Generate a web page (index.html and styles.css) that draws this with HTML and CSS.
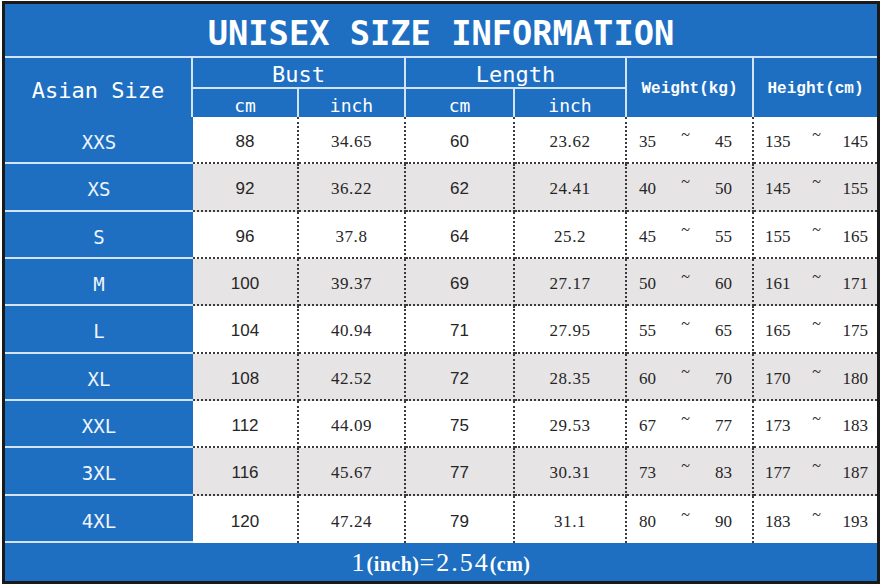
FILE: index.html
```html
<!DOCTYPE html>
<html lang="en">
  <head>
    <meta charset="UTF-8" />
    <meta name="viewport" content="width=device-width, initial-scale=1.0" />
    <title>Unisex Size Information</title>
    <link rel="stylesheet" href="styles.css">
  </head>
  <body>
    <div class="chart">
      <div class="title">UNISEX SIZE INFORMATION</div>

      <table class="sizes">
        <colgroup>
          <col class="c-size" />
          <col class="c-bcm" />
          <col class="c-binch" />
          <col class="c-lcm" />
          <col class="c-linch" />
          <col class="c-weight" />
          <col class="c-height" />
        </colgroup>
        <thead>
          <tr class="head-top">
            <th rowspan="2" class="size-head">Asian Size</th>
            <th colspan="2" class="group">Bust</th>
            <th colspan="2" class="group">Length</th>
            <th rowspan="2" class="small-head">Weight(kg)</th>
            <th rowspan="2" class="small-head last">Height(cm)</th>
          </tr>
          <tr class="head-sub">
            <th class="unit">cm</th>
            <th class="unit">inch</th>
            <th class="unit">cm</th>
            <th class="unit">inch</th>
          </tr>
        </thead>
        <tbody>
          <tr>
            <th class="size">XXS</th>
            <td class="cm">88</td><td class="inch">34.65</td>
            <td class="cm">60</td><td class="inch">23.62</td>
            <td class="w"><div class="range"><span>35</span><span class="tilde">~</span><span>45</span></div></td>
            <td class="h"><div class="range"><span>135</span><span class="tilde">~</span><span>145</span></div></td>
          </tr>
          <tr class="alt">
            <th class="size">XS</th>
            <td class="cm">92</td><td class="inch">36.22</td>
            <td class="cm">62</td><td class="inch">24.41</td>
            <td class="w"><div class="range"><span>40</span><span class="tilde">~</span><span>50</span></div></td>
            <td class="h"><div class="range"><span>145</span><span class="tilde">~</span><span>155</span></div></td>
          </tr>
          <tr>
            <th class="size">S</th>
            <td class="cm">96</td><td class="inch">37.8</td>
            <td class="cm">64</td><td class="inch">25.2</td>
            <td class="w"><div class="range"><span>45</span><span class="tilde">~</span><span>55</span></div></td>
            <td class="h"><div class="range"><span>155</span><span class="tilde">~</span><span>165</span></div></td>
          </tr>
          <tr class="alt">
            <th class="size">M</th>
            <td class="cm">100</td><td class="inch">39.37</td>
            <td class="cm">69</td><td class="inch">27.17</td>
            <td class="w"><div class="range"><span>50</span><span class="tilde">~</span><span>60</span></div></td>
            <td class="h"><div class="range"><span>161</span><span class="tilde">~</span><span>171</span></div></td>
          </tr>
          <tr>
            <th class="size">L</th>
            <td class="cm">104</td><td class="inch">40.94</td>
            <td class="cm">71</td><td class="inch">27.95</td>
            <td class="w"><div class="range"><span>55</span><span class="tilde">~</span><span>65</span></div></td>
            <td class="h"><div class="range"><span>165</span><span class="tilde">~</span><span>175</span></div></td>
          </tr>
          <tr class="alt">
            <th class="size">XL</th>
            <td class="cm">108</td><td class="inch">42.52</td>
            <td class="cm">72</td><td class="inch">28.35</td>
            <td class="w"><div class="range"><span>60</span><span class="tilde">~</span><span>70</span></div></td>
            <td class="h"><div class="range"><span>170</span><span class="tilde">~</span><span>180</span></div></td>
          </tr>
          <tr>
            <th class="size">XXL</th>
            <td class="cm">112</td><td class="inch">44.09</td>
            <td class="cm">75</td><td class="inch">29.53</td>
            <td class="w"><div class="range"><span>67</span><span class="tilde">~</span><span>77</span></div></td>
            <td class="h"><div class="range"><span>173</span><span class="tilde">~</span><span>183</span></div></td>
          </tr>
          <tr class="alt">
            <th class="size">3XL</th>
            <td class="cm">116</td><td class="inch">45.67</td>
            <td class="cm">77</td><td class="inch">30.31</td>
            <td class="w"><div class="range"><span>73</span><span class="tilde">~</span><span>83</span></div></td>
            <td class="h"><div class="range"><span>177</span><span class="tilde">~</span><span>187</span></div></td>
          </tr>
          <tr class="last-row">
            <th class="size">4XL</th>
            <td class="cm">120</td><td class="inch">47.24</td>
            <td class="cm">79</td><td class="inch">31.1</td>
            <td class="w"><div class="range"><span>80</span><span class="tilde">~</span><span>90</span></div></td>
            <td class="h"><div class="range"><span>183</span><span class="tilde">~</span><span>193</span></div></td>
          </tr>
        </tbody>
      </table>

      <div class="footer">
        <span class="big">1</span><span class="paren">(inch)</span><span class="big">=2.54</span><span class="paren">(cm)</span>
      </div>
    </div>
  </body>
</html>
```

FILE: styles.css
```css
:root {
  --blue: #1e6fc1;
  --line-light: #d3e4f6;
  --row-alt: #e6e4e5;
  --dots: #3a3a3a;
}

body {
  margin: 0;
  background-color: #ffffff;
}

.chart {
  width: 872px;
  margin: 1px 0 0 2px;
  border: 3px solid #1a1a1a;
  background-color: var(--blue);
}

.title {
  height: 52px;
  line-height: 60px;
  border-bottom: 2px solid var(--line-light);
  color: #ffffff;
  text-align: center;
  font-family: 'DejaVu Sans Mono', monospace;
  font-weight: bold;
  font-size: 33.7px;
}

.sizes {
  width: 872px;
  table-layout: fixed;
  border-collapse: separate;
  border-spacing: 0;
}

.c-size { width: 188px; }
.c-bcm { width: 106px; }
.c-binch { width: 107px; }
.c-lcm { width: 109px; }
.c-linch { width: 112px; }
.c-weight { width: 127px; }
.c-height { width: 123px; }

th,
td {
  padding: 0;
  box-sizing: border-box;
  text-align: center;
  font-weight: normal;
}

thead th {
  color: #ffffff;
  border-right: 2px solid var(--line-light);
}

thead th.last {
  border-right: none;
}

.head-top {
  height: 31px;
}

.head-sub {
  height: 28px;
}

.size-head {
  font-family: 'DejaVu Sans Mono', monospace;
  font-size: 22px;
  padding-top: 6px;
}

.group {
  font-family: 'DejaVu Sans Mono', monospace;
  font-size: 22px;
  border-bottom: 2px solid var(--line-light);
  line-height: 24px;
  padding-top: 5px;
}

.unit {
  font-family: 'DejaVu Sans Mono', monospace;
  font-size: 18px;
  line-height: 22px;
  padding-top: 5px;
}

.small-head {
  font-family: 'Liberation Mono', monospace;
  font-weight: bold;
  font-size: 16px;
  padding-top: 3px;
}

tbody tr {
  height: 47.33px;
  background-color: #ffffff;
}

tbody tr.alt {
  background-color: var(--row-alt);
}

.size {
  background-color: var(--blue);
  color: #eef5fd;
  font-family: 'DejaVu Sans Mono', monospace;
  font-size: 19px;
  border-bottom: 2px solid var(--line-light);
  padding-top: 5px;
}

td {
  color: #262626;
  border-right: 2px dotted var(--dots);
  border-bottom: 2px dotted var(--dots);
  padding-top: 5px;
}

td.h {
  border-right: none;
}

.last-row td {
  border-bottom: none;
}

.cm {
  font-family: 'Liberation Sans', Arial, sans-serif;
  font-size: 17px;
}

.inch {
  font-family: 'Liberation Serif', serif;
  font-size: 17px;
  letter-spacing: 0.6px;
}

.range {
  display: flex;
  align-items: center;
  justify-content: space-between;
  font-family: 'Liberation Serif', serif;
  font-size: 17px;
}

.w .range {
  padding: 0 20px 0 12px;
}

.h .range {
  padding: 0 9px 0 11px;
}

.tilde {
  font-size: 16px;
  margin-bottom: 14px;
}

.footer {
  height: 38px;
  line-height: 40px;
  color: #ffffff;
  text-align: center;
  font-family: 'Liberation Serif', serif;
}

.footer .big {
  font-size: 26px;
  letter-spacing: 2px;
}

.footer .paren {
  font-size: 20px;
  font-weight: bold;
  letter-spacing: 0.5px;
}
```
